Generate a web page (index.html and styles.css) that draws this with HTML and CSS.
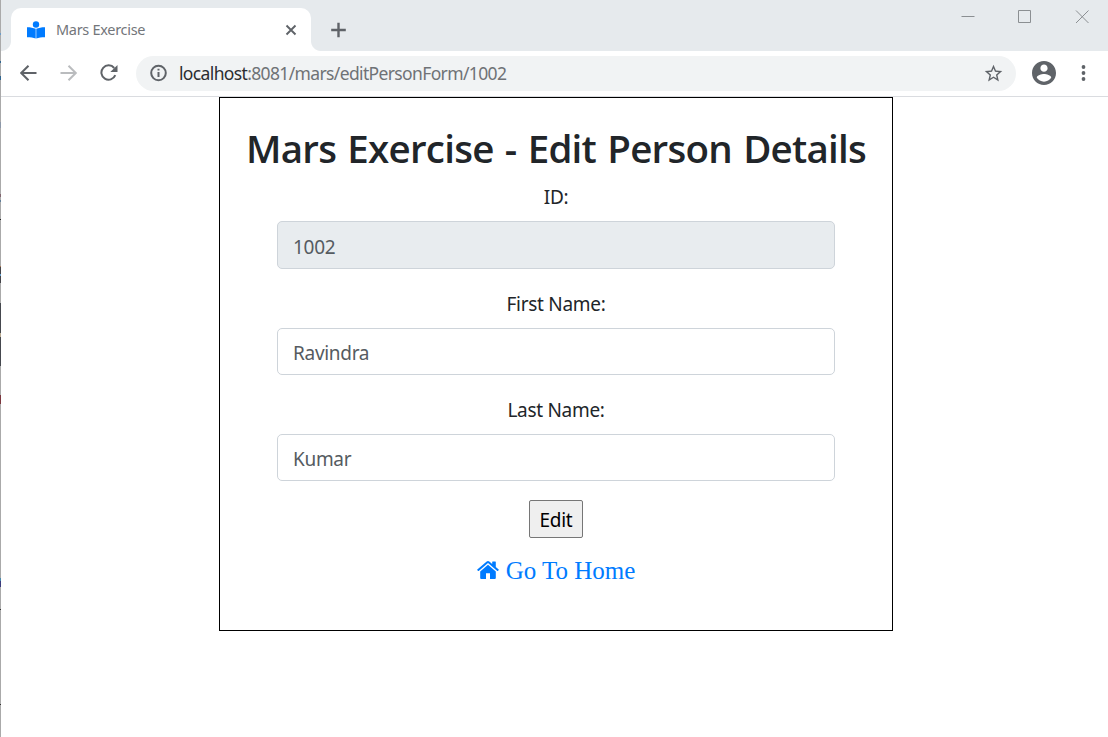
FILE: index.html
```html
<!DOCTYPE html>
<html lang="en">
<head>
<meta charset="utf-8">
<title>Mars Exercise</title>
<link rel="stylesheet" href="styles.css">
</head>
<body>
<div class="window">
  <header class="tabstrip">
    <div class="tab">
      <svg class="favicon" viewBox="0 0 18 18" width="18" height="18"><circle cx="9" cy="3.500" r="3.200"/><path d="M0 6.200C3.500 6.200 6.500 6.800 8.700 7.800V17.500C6.500 16.600 3.500 16.200 0 16.200ZM18 6.200C14.500 6.200 11.500 6.800 9.300 7.800V17.500C11.500 16.600 14.500 16.200 18 16.200Z"/></svg>
      <span class="tab-title">Mars Exercise</span>
      <svg class="tab-close" viewBox="0 0 12 12" width="12" height="12"><path d="M1.500 1.500 10.500 10.500M10.500 1.500 1.500 10.500"/></svg>
    </div>
    <svg class="new-tab" viewBox="0 0 16 16" width="16" height="16"><path d="M8.500.7V15.300M1.200 8H15.800"/></svg>
    <div class="controls">
      <svg viewBox="0 0 14 14" width="14" height="14"><path d="M.5 6.500H13.500"/></svg>
      <svg viewBox="0 0 14 14" width="14" height="14"><path d="M.5.5H12.500V12.500H.5Z"/></svg>
      <svg viewBox="0 0 14 14" width="14" height="14"><path d="M1 .5 13.500 13M13.500.5 1 13"/></svg>
    </div>
  </header>
  <nav class="toolbar">
    <svg class="nav-icon" viewBox="0 0 18 18" width="18" height="18"><path d="M16.500 9H2M8.500 1.700 1.200 9 8.500 16.300"/></svg>
    <svg class="nav-icon disabled" viewBox="0 0 18 18" width="18" height="18"><path d="M.5 9H15.500M8.500 1.700 15.800 9 8.500 16.300"/></svg>
    <svg class="nav-icon" viewBox="0 0 18 18" width="18" height="18"><path d="M15.300 11.200A7.200 7.200 0 1 1 14.200 4"/><path class="solid" d="M17.500.9V8.100H10.300Z"/></svg>
    <div class="address">
      <svg class="info" viewBox="0 0 18 18" width="18" height="18"><circle cx="8.500" cy="9" r="7.300"/><path d="M8.500 8V13M8.500 4.700V6.600"/></svg>
      <span class="url"><b class="host">localhost</b>:8081/mars/editPersonForm/1002</span>
      <svg class="star" viewBox="0 0 24 24" width="21" height="21"><path d="M22 9.240l-7.190-.62L12 2 9.190 8.630 2 9.240l5.460 4.730L5.820 21 12 17.270 18.180 21l-1.630-7.030L22 9.240zM12 15.400l-3.760 2.270 1-4.280-3.320-2.880 4.380-.38L12 6.100l1.710 4.040 4.380.38-3.320 2.880 1 4.280L12 15.400z"/></svg>
    </div>
    <svg class="profile" viewBox="2 2 20 20" width="24" height="24"><path d="M12 2C6.480 2 2 6.480 2 12s4.480 10 10 10 10-4.480 10-10S17.520 2 12 2zm0 3c1.660 0 3 1.340 3 3s-1.340 3-3 3-3-1.340-3-3 1.340-3 3-3zm0 14.200c-2.500 0-4.710-1.280-6-3.220.03-1.990 4-3.080 6-3.080 1.990 0 5.970 1.090 6 3.080-1.290 1.940-3.500 3.220-6 3.220z"/></svg>
    <svg class="menu" viewBox="0 0 5 16" width="5" height="16"><circle cx="2.500" cy="2" r="1.900"/><circle cx="2.500" cy="8" r="1.900"/><circle cx="2.500" cy="14" r="1.900"/></svg>
  </nav>
  <main class="page">
    <form class="card">
      <h1 class="title">Mars Exercise - Edit Person Details</h1>
      <label class="label" for="pid">ID:</label>
      <input class="field readonly" id="pid" value="1002" readonly>
      <label class="label" for="first">First Name:</label>
      <input class="field" id="first" value="Ravindra">
      <label class="label" for="last">Last Name:</label>
      <input class="field" id="last" value="Kumar">
      <button class="submit" type="button">Edit</button>
      <a class="home"><svg viewBox="0 0 22 18" width="22" height="18"><path d="M11 3.800 18.800 10.400V17Q18.800 18 17.800 18H13V12.200H9V18H4.200Q3.200 18 3.200 17V10.400Z"/><path d="M11 0Q11.700 0 12.300.5L15.200 3V.9Q15.200.4 15.700.4H18.300Q18.800.4 18.800.9V6L21.700 8.500Q22 8.800 21.700 9.100L21 9.900Q20.700 10.200 20.300 9.900L11 2.100 1.700 9.900Q1.300 10.200 1 9.900L.3 9.100Q0 8.800.3 8.500L9.700.5Q10.300 0 11 0Z"/></svg><span class="home-text">Go To Home</span></a>
    </form>
  </main>
  <div class="edge"></div>
</div>
</body>
</html>
```
FILE: styles.css
```css
* { box-sizing: border-box; }
body { margin: 0; background: #fff; font-family: "Noto Sans", "Open Sans", sans-serif; }
.window { position: relative; width: 1108px; height: 737px; overflow: hidden; }
svg { display: block; flex: none; }

.tabstrip { display: flex; height: 51px; padding-left: 11px; background: #e6eaed; }
.tab { position: relative; display: flex; align-items: center; width: 300px; height: 43px; margin-top: 8px; padding: 0 14px 0 16px; border-radius: 10px 10px 0 0; background: #fff; }
.tab::before, .tab::after { content: ""; position: absolute; bottom: 0; width: 10px; height: 10px; }
.tab::before { left: -10px; background: radial-gradient(circle at 0 0, transparent 9.5px, #fff 10.5px); }
.tab::after { right: -10px; background: radial-gradient(circle at 100% 0, transparent 9.5px, #fff 10.5px); }
.favicon { fill: #007bff; }
.tab-title { flex: 1; margin-left: 11px; padding-bottom: 2px; font-size: 14.5px; letter-spacing: -.3px; color: #73767a; }
.tab-close { fill: none; stroke: #5f6368; stroke-width: 1.9; }
.new-tab { margin: 22px 0 0 19px; fill: none; stroke: #5f6368; stroke-width: 2.4; }
.controls { display: flex; gap: 43px; margin: 10px 19px 0 auto; fill: none; stroke: #8b8f92; stroke-width: 1; }

.toolbar { display: flex; align-items: center; height: 46px; padding: 0 22px 1px 20px; background: #fff; border-bottom: 1px solid #dadce0; }
.nav-icon { margin-right: 22px; fill: none; stroke: #5f6368; stroke-width: 2; }
.nav-icon.disabled { stroke: #babcbe; }
.nav-icon .solid { fill: #5f6368; stroke: none; }
.address { display: flex; align-items: center; width: 880px; height: 35px; margin-left: -4px; padding: 0 12px 0 14px; border-radius: 18px; background: #f1f3f4; }
.info { fill: none; stroke: #5f6368; stroke-width: 2; }
.url { flex: 1; margin-left: 11px; font-size: 17.5px; letter-spacing: -.64px; color: #6f7276; white-space: nowrap; }
.host { font-weight: 400; color: #2b2c30; }
.star { fill: #5f6368; }
.profile { margin-left: 15.5px; fill: #5f6368; }
.menu { margin-left: auto; fill: #5f6368; }

.page { display: flex; padding-left: 219px; }
.card { display: flex; flex-direction: column; align-items: center; width: 674px; height: 534px; padding-top: 23px; border: 1px solid #000; color: #212529; }
.title { height: 56px; margin: 0; font-family: "Open Sans", "Noto Sans", sans-serif; font-size: 38.5px; font-weight: 600; line-height: 55px; letter-spacing: -.76px; word-spacing: 2px; white-space: nowrap; }
.label { height: 28px; margin: 6px 0 10px; font-size: 19px; line-height: 28px; letter-spacing: -.3px; }
.field { width: 558px; height: 47px; margin: 0 0 15px; padding: 3px 15px 0; border: 1px solid #ced4da; border-radius: 5px; background: #fff; color: #555b61; font-family: inherit; font-size: 19px; letter-spacing: -.3px; outline: 0; }
.field.readonly { height: 48px; background: #e8ecef; }
.submit { width: 54px; height: 38px; margin-top: 4px; padding: 2px 0 0; border: 1px solid #767676; border-radius: 2px; background: #efefef; color: #000; font-family: inherit; font-size: 19px; letter-spacing: -.3px; }
.home { display: flex; align-items: center; gap: 7px; height: 30px; margin-top: 17px; color: #007bff; font-family: "Liberation Serif", serif; font-size: 25px; white-space: nowrap; }
.home-text { padding-top: 2px; }
.home svg { fill: currentColor; }

.edge { position: absolute; left: 0; top: 0; width: 1px; height: 737px; background: linear-gradient(#aaa 0 33px, #6d9bc5 33px 35px, #aaa 35px 61px, #31658f 61px 63px, #aaa 63px 76px, #31658f 76px 80px, #aaa 80px 122px, #8d98a8 122px 128px, #aaa 128px 194px, #80656e 194px 197px, #aaa 197px 200px, #607d98 200px 202px, #aaa 202px 219px, #222 219px 220px, #aaa 220px 266px, #a87550 266px 267px, #444449 267px 274px, #66a0cc 274px 276px, #444449 276px 283px, #aaa 283px 303px, #45484e 303px 333px, #b8a990 333px 337px, #45484e 337px 366px, #aaa 366px 395px, #7b363e 395px 404px, #aaa 404px 578px, #4a8aad 578px 581px, #3b3b7c 581px 587px, #aaa 587px 609px, #333 609px 610px, #aaa 610px 704px, #333 704px 705px, #aaa 705px); }
```
